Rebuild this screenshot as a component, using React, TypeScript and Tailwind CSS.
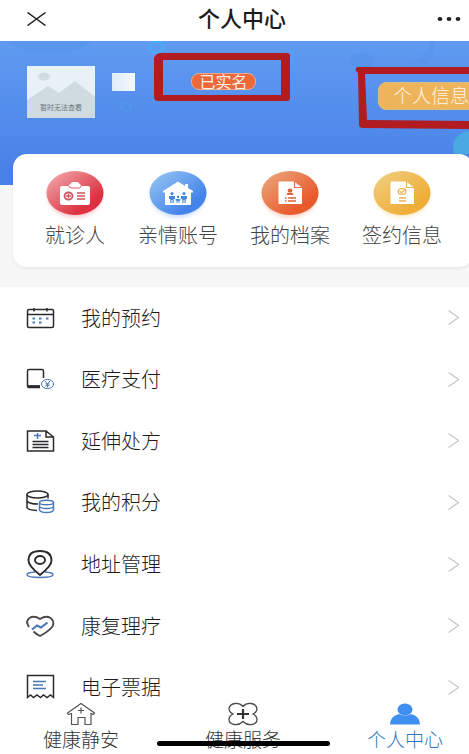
import type { ReactNode } from "react";

const ink = "#2b2b2f";
const blue = "#4a78b8";

function Disc({ id, from, to, children }: { id: string; from: string; to: string; children: ReactNode }) {
  return (
    <svg width="58" height="46" viewBox="0 0 58 46" aria-hidden="true" className="overflow-visible">
      <defs>
        <linearGradient id={id} x1="0" y1="0" x2="1" y2="1">
          <stop offset="0.1" stopColor={from} />
          <stop offset="0.75" stopColor={to} />
        </linearGradient>
        <filter id={id + "-glow"} x="-20%" y="-20%" width="140%" height="150%">
          <feGaussianBlur stdDeviation="2" />
        </filter>
      </defs>
      <ellipse cx="29" cy="25" rx="27" ry="21" fill={to} opacity="0.3" filter={`url(#${id}-glow)`} />
      <ellipse cx="29" cy="22" rx="28.5" ry="22" fill={`url(#${id})`} />
      {children}
    </svg>
  );
}

const shortcuts = [
  {
    label: "就诊人",
    icon: (
      <Disc id="red" from="#efa0a3" to="#dd3040">
        <path d="M16 15h7c0-2 2-2 3-4h6c1 2 3 2 3 4h7q2 0 2 2v15q0 2-2 2H16q-2 0-2-2V17q0-2 2-2z" fill="#fff" />
        <path d="M23 15q.5 2 2 2h8q1.500 0 2-2" fill="none" stroke="#de5a66" strokeWidth="1" />
        <ellipse cx="22.500" cy="25" rx="4" ry="3.500" fill="none" stroke="#c95a64" strokeWidth="1.800" />
        <path d="M20 25h5M22.500 23v4M31 22h8M31 25h8M31 28h8" stroke="#d05560" strokeWidth="1.300" />
      </Disc>
    ),
  },
  {
    label: "亲情账号",
    icon: (
      <Disc id="blue" from="#8fc0f2" to="#4484ea">
        <path d="M14 20 29 10.500l7 4.500v-2h3v4l5 3v1.500h-2V33q0 1-1 1H17q-1 0-1-1V21.500h-2z" fill="#fff" />
        <g fill="#4588d8">
          <circle cx="23" cy="22.500" r="1.600" />
          <circle cx="35" cy="22.500" r="1.600" />
          <circle cx="29" cy="26" r="1.200" />
          <path d="M20 25h6v3h-1.300v4h-1.200v-3h-1v3h-1.200v-4H20zM32 25h6v3h-1.300v4h-1.200v-3h-1v3h-1.200v-4H32zM26.500 28h5v1.500h-1V32h-1v-2h-1v2h-1v-2.500h-1z" />
        </g>
      </Disc>
    ),
  },
  {
    label: "我的档案",
    icon: (
      <Disc id="orange" from="#eba077" to="#e85a2b">
        <path d="M18.500 10.500H33l8 6V32q0 1-1 1H18.500q-1 0-1-1V11.500q0-1 1-1z" fill="#fff" />
        <path d="M33.500 10.500v6H41" fill="none" stroke="#e9683e" strokeWidth="1.200" />
        <ellipse cx="29" cy="19.500" rx="2.400" ry="2" fill="#d9633c" />
        <path d="M25.500 24q0-2.500 3.500-2.500t3.500 2.500z" fill="#d9633c" />
        <path d="M24 27h1.500M27 27h8M24 30h1.500M27 30h8" stroke="#d9633c" strokeWidth="1.300" />
      </Disc>
    ),
  },
  {
    label: "签约信息",
    icon: (
      <Disc id="gold" from="#f0cb7a" to="#efae38">
        <path d="M18.500 10.500H33l8 6V32q0 1-1 1H18.500q-1 0-1-1V11.500q0-1 1-1z" fill="#fff" />
        <path d="M33.500 10.500v6H41" fill="none" stroke="#edb751" strokeWidth="1.200" />
        <ellipse cx="29" cy="20.500" rx="3.800" ry="2.900" fill="none" stroke="#e8b55a" strokeWidth="1.300" />
        <path d="m26.500 20 2 1.700 4.500-4M26 27h7M26 30h7" fill="none" stroke="#e8b55a" strokeWidth="1.300" />
      </Disc>
    ),
  },
];

const menu = [
  {
    label: "我的预约",
    icon: (
      <>
        <path d="M1.500 5q0-1.500 1.500-1.500h23q1.500 0 1.500 1.500v15q0 1.500-1.500 1.500H3Q1.500 21.500 1.500 20zM1.500 8.500h26M8 2v3.500M21 2v3.500" />
        <path d="M6.500 12.500h2.500M13 12.500h2.500M20 12.500h2.500M6.500 16.500h2.500M13 16.500h2.500" stroke={blue} strokeWidth="2" />
      </>
    ),
  },
  {
    label: "医疗支付",
    icon: (
      <>
        <path d="M17.500 11V4q0-1.500-1.500-1.500H3Q1.500 2.500 1.500 4v15q0 1.500 1.500 1.500h11" />
        <path d="M2 19.500h12" strokeWidth="2.800" />
        <g stroke={blue} strokeWidth="1">
          <ellipse cx="21.500" cy="17" rx="6" ry="4.600" />
          <path d="m19 14 2.500 3 2.500-3M21.500 17v3.500M19.500 17h4M19.500 18.700h4" />
        </g>
      </>
    ),
  },
  {
    label: "延伸处方",
    icon: (
      <>
        <path d="M2 2h18l7.500 6v14h-26V2zM20 2v6h7M6.500 12.500h16M6.500 15.500h16M6.500 18.500h16" />
        <path d="M8 6.500h7M11.500 4v6" stroke={blue} />
      </>
    ),
  },
  {
    label: "我的积分",
    icon: (
      <>
        <ellipse cx="11.500" cy="4.500" rx="10.500" ry="3.500" />
        <path d="M1 4.500v13q1 2.500 10 3M22 4.500v4M1 11q2 3 11 3" />
        <g stroke={blue}>
          <ellipse cx="20.500" cy="12.500" rx="7" ry="2.300" />
          <path d="M13.500 12.500V20q1 2.500 7 2.500t7-2.500v-7.500M13.500 16.500q1 2 7 2t7-2" />
        </g>
      </>
    ),
  },
  {
    label: "地址管理",
    icon: (
      <>
        <path d="M9 20q-8 .5-8 2.500 0 3 13 3t13-3q0-2-8-2.500" stroke={blue} />
        <path d="M14 23Q2.500 14 2.500 8.500 2.500-1 14-1T25.500 8.500Q25.500 14 14 23z" strokeWidth="1.900" />
        <ellipse cx="14" cy="8" rx="5" ry="4" strokeWidth="1.900" />
      </>
    ),
  },
  {
    label: "康复理疗",
    icon: (
      <>
        <path d="M3 13Q-1 7 3.500 4T14 5q6-4 10.500-1t2 8.500q-4 5-12.500 9.500-4-2-6.500-4.500" stroke="#4a4a48" strokeWidth="1.900" />
        <path d="m6 15.500 5-4 4 2 6.500-5" stroke={blue} strokeWidth="2.200" />
      </>
    ),
  },
  {
    label: "电子票据",
    icon: (
      <>
        <path d="M1.500.500h26v22l-3-2.500-3.500 2.500-3.500-2.500-3 2.500-3.500-2.500-3.500 2.500-3-2.500-3 2.500z" />
        <path d="M7 6.500h13M7 10h10M7 13.500h13" stroke={blue} />
      </>
    ),
  },
];

const tabs = [
  {
    label: "健康静安",
    icon: (
      <path d="M.5 10 14 .500 27.500 10l-1 1.500-2.500-1V21.500h-6v-7h-7v7H4.500V10.500l-3 1zM14 4.500v6M11 7.500h6" stroke="#555" strokeWidth="1.200" />
    ),
  },
  {
    label: "健康服务",
    icon: (
      <>
        <path d="M14 3.500Q17 0 22 .5t6 5q0 3.500-4 5.500 4 2 4 5.500 0 4-5 5t-9-3q-4 4-9 3t-5-5Q0 13 4 11 0 9 0 5.500 1 1 6 .5t8 3z" stroke="#4a4a4a" strokeWidth="1.300" />
        <path d="M8 11h12M14 6v10" stroke="#333" strokeWidth="2.200" />
      </>
    ),
  },
  {
    label: "个人中心",
    active: true,
    icon: (
      <g fill="#3f8ff0">
        <ellipse cx="14" cy="6.500" rx="7.500" ry="6" />
        <path d="M-1 21.500q0-8 9-10.500 6 3 12 0 9 2.500 9 10.500z" />
      </g>
    ),
  },
];

function Hero() {
  return (
    <section className="relative h-[113px] overflow-hidden">
      <svg className="absolute inset-0 size-full" aria-hidden="true">
        <ellipse cx="50" cy="-6" rx="46" ry="18" fill="#4d88e6" opacity="0.2" />
        <ellipse cx="362" cy="20" rx="13" ry="8" fill="#4a86e4" opacity="0.25" />
        <path d="M434 0q4 14-8 23l-14-2q18-8 18-21z" fill="#4a86e4" opacity="0.2" />
        <ellipse cx="156.500" cy="6" rx="7" ry="5.500" fill="none" stroke="#45b0f2" strokeWidth="2" />
        <ellipse cx="126" cy="66" rx="5" ry="4" fill="none" stroke="#4fa6ea" strokeWidth="1.500" opacity="0.5" />
        <ellipse cx="470" cy="106" rx="17" ry="16" fill="#49a9e2" />
      </svg>
      <div className="relative flex items-start pl-[27px] pt-[25px]">
        <svg width="68" height="52" viewBox="0 0 68 52" role="img" aria-label="头像" className="shrink-0">
          <rect width="68" height="52" fill="#e8f1f8" />
          <ellipse cx="17" cy="10.500" rx="6" ry="4" fill="#d0dbe1" />
          <path d="M0 34 21 20l11 7 16-12 20 16v21H0z" fill="#cfdbe1" />
          <text x="34" y="44" textAnchor="middle" fontSize="7" fill="#68737b" fontFamily="Noto Sans CJK SC, sans-serif">暂时无法查看</text>
        </svg>
        <div className="ml-[17px] mt-[7px] h-[18px] w-[23px] shrink-0 bg-linear-to-r from-[#dfecfb] to-[#f4f9fe]" />
        <span className="ml-14 mt-[7px] flex h-[17px] w-[65px] shrink-0 items-center justify-center rounded-lg border border-[#f3a98d] bg-[#ea6a3c] pb-0.5 text-base leading-4 text-[#fff1e6]">
          已实名
        </span>
        <button className="ml-[122px] mt-4 h-7 w-[112px] shrink-0 rounded-lg border border-[#d8bd83] bg-[#edb45c] pb-0.5 pl-3.5 text-left text-[19px] font-light leading-6 text-[#fff6e2]">
          个人信息
        </button>
      </div>
      <svg className="absolute inset-0 size-full" aria-hidden="true">
        <path d="M154 17q2-5 7-5h126q3 0 3 3v42q0 3-3 3H158q-4 0-4-4zM163 19v35h118V19z" fill="#b01c1f" fillRule="evenodd" />
        <path d="M480 26H357q-3 3 1 6l1 51q0 4 4 4l117 1v-8l-113-1-2-46h115z" fill="#b01c1f" />
      </svg>
    </section>
  );
}

export default function App() {
  return (
    <div className="min-h-screen overflow-hidden bg-white pb-[53px] font-['Noto_Sans_CJK_SC',sans-serif]">
      <header className="flex h-[41px] items-center justify-between pb-1 pl-[27px] pr-2">
        <button aria-label="关闭" className="w-6">
          <svg width="19" height="14" viewBox="0 0 19 14" stroke="#222" strokeWidth="1.500" aria-hidden="true">
            <path d="m.5.500 18 13M18.500.500l-18 13" />
          </svg>
        </button>
        <h1 className="pb-1 pr-1 text-[22px] font-medium leading-8 text-[#1c1c1c]">个人中心</h1>
        <button aria-label="更多" className="w-6">
          <svg width="24" height="6" viewBox="0 0 24 6" fill="#222" aria-hidden="true">
            <ellipse cx="3" cy="3" rx="2.400" ry="2" />
            <ellipse cx="12" cy="3" rx="2.400" ry="2" />
            <ellipse cx="21" cy="3" rx="2.400" ry="2" />
          </svg>
        </button>
      </header>

      <div className="h-[246px] bg-[#f7f7f7]">
        <div className="h-[144px] bg-linear-to-b from-[#609bf1] to-[#477fe6]">
          <Hero />
          <section className="-mr-1 ml-[13px] flex h-[113px] gap-8 rounded-[14px] bg-white pl-[31px] pt-[17px] shadow-[0_2px_4px_rgba(0,0,0,0.06)]">
            {shortcuts.map((s) => (
              <button key={s.label} className="flex shrink-0 flex-col items-center gap-1 text-xl font-light leading-7 text-[#444] first:w-[62px]">
                {s.icon}
                <span>{s.label}</span>
              </button>
            ))}
          </section>
        </div>
      </div>

      <ul className="grid h-[431px] auto-rows-fr">
        {menu.map((m) => (
          <li key={m.label}>
            <a href="#" className="flex h-full items-center pl-[26px] pr-2.5">
              <svg width="28" height="24" viewBox="0 0 28 24" fill="none" stroke={ink} strokeWidth="1.500" aria-hidden="true" className="overflow-visible">
                {m.icon}
              </svg>
              <span className="ml-[27px] flex-1 text-xl font-light leading-7 text-[#1c1c1c]">{m.label}</span>
              <svg width="11" height="15" viewBox="0 0 11 15" fill="none" stroke="#c9c9c9" strokeWidth="1.300" aria-hidden="true">
                <path d="m.5.500 10 7-10 7" />
              </svg>
            </a>
          </li>
        ))}
      </ul>

      <nav className="fixed inset-x-0 bottom-0 h-[53px]">
        <div className="-mr-[17px] grid grid-cols-3 bg-white">
          {tabs.map((t) => (
            <a
              key={t.label}
              href="#"
              className={"flex flex-col items-center gap-0.5 pb-1 pt-0.5 text-[19px] font-light leading-6 " + (t.active ? "text-[#2f78c0]" : "text-[#333]")}
            >
              <svg width="28" height="22" viewBox="0 0 28 22" fill="none" aria-hidden="true" className="overflow-visible">
                {t.icon}
              </svg>
              {t.label}
            </a>
          ))}
        </div>
        <div className="absolute bottom-2 left-[157px] h-[5px] w-[173px] rounded-full bg-black" />
      </nav>
    </div>
  );
}
